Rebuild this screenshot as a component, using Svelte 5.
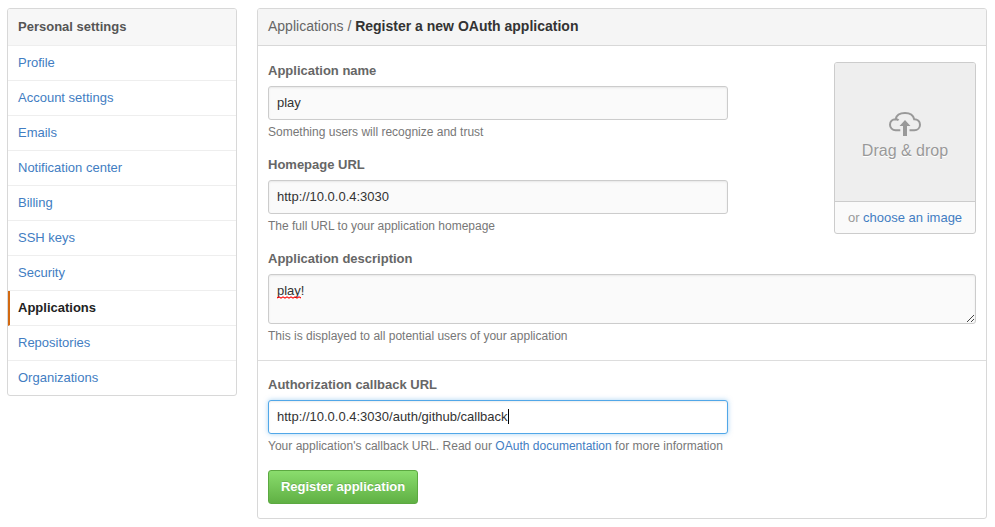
<script>
  const links = ['Profile', 'Account settings', 'Emails', 'Notification center', 'Billing', 'SSH keys', 'Security', 'Applications', 'Repositories', 'Organizations'];
  const current = 'Applications';
</script>

<div class="page">
  <nav class="menu">
    <h3>Personal settings</h3>
    {#each links as link}
      <a href="#top" class:selected={link === current}>{link}</a>
    {/each}
  </nav>

  <main class="box">
    <h2><span class="crumb">Applications /</span> <strong>Register a new OAuth application</strong></h2>
    <section class="details">
      <div class="top">
        <div class="narrow">
          <div class="group">
            <div class="label">Application name</div>
            <div class="field">play</div>
            <p>Something users will recognize and trust</p>
          </div>
          <div class="group">
            <div class="label">Homepage URL</div>
            <div class="field">http://10.0.0.4:3030</div>
            <p>The full URL to your application homepage</p>
          </div>
        </div>
        <div class="upload">
          <div class="drop">
            <svg width="32" height="24" viewBox="0 0 32 24" fill="none">
              <path d="M11.3 18.2H6.6C3.4 18.2 1 15.8 1 12.7C1 9.6 3.4 7.3 6.6 7.2C7.4 3.4 11.2 1 16 1C20.8 1 24.3 3.3 25.2 7.2C28.6 7.3 31 9.6 31 12.7C31 15.8 28.6 18.2 25.4 18.2H20.5M6.6 7.2C7.8 7.2 8.8 7.5 9.6 8.2" stroke="#999" stroke-width="2" />
              <path d="M16 8L21.5 14H18V24H14V14H10.5Z" fill="#999" />
            </svg>
            <span>Drag &amp; drop</span>
          </div>
          <div class="choose">or <a href="#top">choose an image</a></div>
        </div>
      </div>
      <div class="group">
        <div class="label">Application description</div>
        <div class="field area">
          <span class="misspelt">play<svg width="24" height="3" viewBox="0 0 24 3"><path d="M0 2L2 .8L4 2.2L6 .8L8 2.2L10 .8L12 2.2L14 .8L16 2.2L18 .8L20 2.2L22 .8L24 2" fill="none" stroke="#f00" stroke-width="1.1" /></svg></span>!
          <svg class="grip" width="8" height="8" viewBox="0 0 8 8" shape-rendering="crispEdges"><path d="M0 7h1v1H0zM1 6h1v1H1zM2 5h1v1H2zM3 4h1v1H3zM4 3h1v1H4zM5 2h1v1H5zM6 1h1v1H6zM4 7h1v1H4zM5 6h1v1H5zM6 5h1v1H6z" fill="#444" /></svg>
        </div>
        <p>This is displayed to all potential users of your application</p>
      </div>
    </section>
    <section class="callback">
      <div class="label">Authorization callback URL</div>
      <div class="field focused">http://10.0.0.4:3030/auth/github/callback<i></i></div>
      <p class="more">Your application's callback URL. Read our <a href="#top">OAuth documentation</a> for more information</p>
      <button type="button">Register application</button>
    </section>
  </main>
</div>

<style>
  :global(body) { background: #fff; }
  .page {
    display: flex;
    align-items: flex-start;
    gap: 20px;
    padding: 8px 8px 0 7px;
    font: 13px/18px "Liberation Sans", Arial, sans-serif;
    color: #333;
  }
  .page, .page * { box-sizing: border-box; }
  a { color: #427dc2; text-decoration: none; }
  h2, h3, p { margin: 0; }
  .menu {
    width: 230px;
    border: 1px solid #d8d8d8;
    border-radius: 3px;
    overflow: hidden;
  }
  .menu h3 {
    height: 37px;
    padding: 9px 10px 0;
    background: #f7f7f7;
    border-bottom: 1px solid #eee;
    font-size: 13px;
    line-height: 18px;
    color: #555;
  }
  .menu a {
    display: block;
    height: 35px;
    padding: 8px 10px 0;
    border-bottom: 1px solid #eee;
  }
  .menu a:last-child { height: 34px; border-bottom: 0; }
  .menu .selected {
    padding-left: 8px;
    border-left: 2px solid #d26911;
    font-weight: bold;
    color: #222;
  }
  .box {
    width: 730px;
    height: 511px;
    border: 1px solid #d8d8d8;
    border-radius: 3px;
    overflow: hidden;
  }
  .box h2 {
    height: 37px;
    padding: 8px 10px 0;
    background: #f5f5f5;
    border-bottom: 1px solid #d8d8d8;
    font-size: 14px;
    line-height: 19px;
    font-weight: normal;
  }
  .crumb { color: #666; }
  .details { height: 315px; padding: 16px 10px 0; border-bottom: 1px solid #ddd; }
  .top { display: flex; justify-content: space-between; height: 188px; }
  .narrow { width: 460px; }
  .group { height: 94px; }
  .label { height: 24px; line-height: 18px; font-weight: bold; color: #666; }
  .field {
    height: 34px;
    padding: 7px 8px;
    line-height: 18px;
    background: #fafafa;
    border: 1px solid #ccc;
    border-radius: 3px;
    box-shadow: inset 0 1px 2px rgba(0, 0, 0, 0.075);
  }
  .area { position: relative; height: 50px; }
  .misspelt { position: relative; }
  .misspelt svg { position: absolute; left: 0; bottom: -1px; }
  .grip { position: absolute; right: 0; bottom: 1px; }
  p { margin-top: 3px; font-size: 12px; line-height: 18px; color: #777; }
  .more { letter-spacing: 0.017px; }
  .upload {
    width: 142px;
    height: 172px;
    background: #fafafa;
    border: 1px solid #ccc;
    border-radius: 3px;
    overflow: hidden;
  }
  .drop {
    display: flex;
    flex-direction: column;
    align-items: center;
    height: 139px;
    padding-top: 49px;
    background: #eee;
    border-bottom: 1px solid #ccc;
    font-size: 16px;
    line-height: 24px;
    color: #999;
    text-shadow: 0 1px 0 #fff;
  }
  .drop svg { margin-bottom: 3px; }
  .choose { padding-top: 7px; text-align: center; color: #999; }
  .callback { padding: 15px 10px 0; }
  .focused {
    width: 460px;
    background: #fff;
    border-color: #51a7e8;
    box-shadow: inset 0 1px 2px rgba(0, 0, 0, 0.075), 0 0 5px rgba(81, 167, 232, 0.5);
  }
  .focused i { display: inline-block; width: 1px; height: 15px; background: #000; vertical-align: -3px; }
  button {
    display: block;
    width: 150px;
    height: 34px;
    margin-top: 15px;
    padding: 0;
    border: 1px solid #5ca941;
    border-radius: 3px;
    background: linear-gradient(#8add6d, #60b044);
    font: bold 13px/18px "Liberation Sans", Arial, sans-serif;
    color: #fff;
    text-shadow: 0 -1px 0 rgba(0, 0, 0, 0.15);
  }
</style>
